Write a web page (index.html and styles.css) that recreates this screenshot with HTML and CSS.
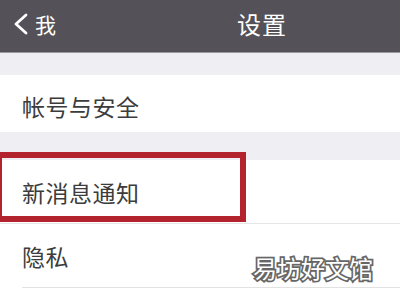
FILE: index.html
```html
<!DOCTYPE html>
<html lang="zh">
<head>
  <meta charset="UTF-8">
  <title>设置</title>
  <link rel="stylesheet" href="styles.css">
</head>
<body>
  <header class="topbar">
    <a href="#" class="back">
      <svg class="chev" width="16" height="22" viewBox="0 0 16 22"><polyline points="13,2 3,11 13,20" fill="none" stroke="#fff" stroke-width="2.8" stroke-linecap="round" stroke-linejoin="round"/></svg>
      <span>我</span>
    </a>
    <div class="title">设置</div>
  </header>

  <div class="gap first"></div>
  <div class="group">
    <div class="row account">帐号与安全</div>
  </div>
  <div class="gap second"></div>
  <div class="group">
    <div class="row mark">
      新消息通知
      <span class="highlight"></span>
    </div>
    <div class="row last">隐私</div>
  </div>

  <div class="watermark">易坊好文馆</div>
</body>
</html>
```

FILE: styles.css
```css
body {
  margin: 0;
  width: 400px;
  height: 300px;
  overflow: hidden;
  position: relative;
  background: #fff;
  font-family: "Noto Sans CJK SC", "Noto Sans", sans-serif;
}
.topbar {
  height: 52px;
  background: #545258;
  border-bottom: 1px solid #9a989e;
  display: flex;
  align-items: center;
  padding-left: 13px;
  color: #fff;
}
.back {
  display: flex;
  align-items: center;
  color: #fff;
  text-decoration: none;
  font-size: 21px;
  margin-top: -4px;
}
.back span {
  margin-left: 6px;
}
.title {
  margin-left: 181px;
  font-size: 24px;
  margin-top: -6px;
  letter-spacing: 1px;
}
.gap {
  background: #efeef3;
}
.gap.first {
  height: 22px;
}
.gap.second {
  height: 28px;
}
.row {
  position: relative;
  padding-left: 22px;
  font-size: 23px;
  color: #3c3c3c;
  display: flex;
  align-items: center;
  letter-spacing: 0.5px;
}
.row.account {
  height: 57px;
  padding-top: 4px;
  box-sizing: border-box;
}
.row.mark {
  height: 63px;
  border-bottom: 1px solid #e6e6e6;
}
.row.last {
  height: 63px;
  margin-left: 22px;
  padding-left: 0;
  border-bottom: 1px solid #e2e2e2;
}
.highlight {
  position: absolute;
  left: -4px;
  top: -8px;
  width: 238px;
  height: 58px;
  border: 6px solid #b3232d;
}
.watermark {
  position: absolute;
  left: 253px;
  top: 250px;
  font-size: 24px;
  color: #fff;
  -webkit-text-stroke: 3.5px #666;
  paint-order: stroke fill;
}
```
